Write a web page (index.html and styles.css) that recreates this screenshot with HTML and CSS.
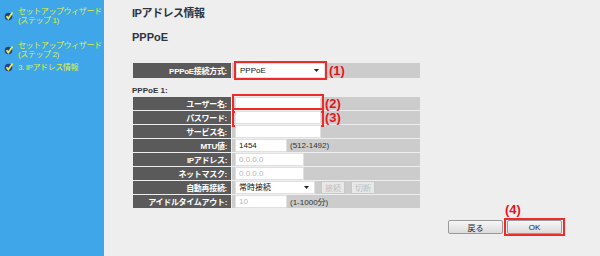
FILE: index.html
```html
<!DOCTYPE html>
<html lang="ja">
<head>
    <meta charset="UTF-8">
    <title>IPアドレス情報</title>
    <link rel="stylesheet" href="styles.css">
</head>
<body>
<div class="page">
    <div class="side">
        <ul class="steps">
            <li class="step1"><svg class="chk" viewBox="0 0 10 10"><circle cx="4.5" cy="5.5" r="3.8" fill="#2a3f8a"/><path d="M2.5 5.2 L4.3 7.4 L8.6 1.4" fill="none" stroke="#e8f040" stroke-width="1.8"/></svg><span>セットアップウィザード<br>(ステップ 1)</span></li>
            <li class="step2"><svg class="chk" viewBox="0 0 10 10"><circle cx="4.5" cy="5.5" r="3.8" fill="#2a3f8a"/><path d="M2.5 5.2 L4.3 7.4 L8.6 1.4" fill="none" stroke="#e8f040" stroke-width="1.8"/></svg><span>セットアップウィザード<br>(ステップ 2)</span></li>
            <li class="step3"><svg class="chk" viewBox="0 0 10 10"><circle cx="4.5" cy="5.5" r="3.8" fill="#2a3f8a"/><path d="M2.5 5.2 L4.3 7.4 L8.6 1.4" fill="none" stroke="#e8f040" stroke-width="1.8"/></svg><span>3. IPアドレス情報</span></li>
        </ul>
    </div>
    <div class="main">
        <h1>IPアドレス情報</h1>
        <h2>PPPoE</h2>
        <table class="form top">
            <tr>
                <th>PPPoE接続方式:</th>
                <td><select class="sel-wide red"><option>PPPoE</option></select><span class="mark">(1)</span></td>
            </tr>
        </table>
        <h3>PPPoE 1:</h3>
        <table class="form">
            <tr><th>ユーザー名:</th><td><input class="w86 red" type="text"><span class="mark">(2)</span></td></tr>
            <tr><th>パスワード:</th><td><input class="w86 red" type="password"><span class="mark">(3)</span></td></tr>
            <tr><th>サービス名:</th><td><input class="w86" type="text"></td></tr>
            <tr><th>MTU値:</th><td><input class="w52" type="text" value="1454"><span class="note">(512-1492)</span></td></tr>
            <tr><th>IPアドレス:</th><td><input class="w69 off" type="text" value="0.0.0.0"></td></tr>
            <tr><th>ネットマスク:</th><td><input class="w69 off" type="text" value="0.0.0.0"></td></tr>
            <tr><th>自動再接続:</th><td><select class="sel-small"><option>常時接続</option></select><button class="mini">接続</button><button class="mini">切断</button></td></tr>
            <tr><th>アイドルタイムアウト:</th><td><input class="w52 off" type="text" value="10"><span class="note">(1-1000分)</span></td></tr>
        </table>
        <div class="btns">
            <button class="btn">戻る</button>
            <div class="okcol">
                <span class="mark">(4)</span>
                <span class="okbox"><button class="btn">OK</button></span>
            </div>
        </div>
    </div>
</div>
</body>
</html>
```

FILE: styles.css
```css
html, body {
    margin: 0;
    padding: 0;
    background: #eeeeee;
    font-family: "Liberation Sans", "Noto Sans CJK JP", sans-serif;
}
.page {
    display: flex;
    height: 256px;
}
.side {
    width: 104px;
    background: #3fa6ea;
    flex-shrink: 0;
}
.steps {
    list-style: none;
    margin: 0;
    padding: 7px 0 0 4px;
}
.steps li {
    display: flex;
    align-items: center;
    color: #dcef3c;
    font-size: 8px;
    line-height: 9px;
    letter-spacing: -0.4px;
    white-space: nowrap;
}
.steps li span {
    margin-left: 4px;
}
.steps .step2 {
    margin-top: 16px;
}
.steps .step3 {
    margin-top: 3px;
}
.chk {
    width: 10px;
    height: 10px;
}
.main {
    padding-left: 28px;
    width: 433px;
}
h1 {
    margin: 6px 0 0 0;
    font-size: 11px;
    line-height: 14px;
    letter-spacing: -0.5px;
    font-weight: bold;
    color: #2e3440;
}
h2 {
    margin: 10px 0 0 0;
    font-size: 11px;
    line-height: 14px;
    font-weight: bold;
    color: #2e3440;
}
h3 {
    margin: 7px 0 0 0;
    font-size: 8px;
    line-height: 10px;
    font-weight: bold;
    color: #333;
}
.form {
    width: 289px;
    border-collapse: separate;
    border-spacing: 1px;
    font-size: 8px;
}
.form.top {
    margin-top: 18px;
}
.form th {
    width: 94px;
    height: 13px;
    padding: 0 4px 0 0;
    background: #5a5a5a;
    color: #ffffff;
    text-align: right;
    font-weight: bold;
    font-size: 8px;
    letter-spacing: -0.3px;
    white-space: nowrap;
}
.form.top th {
    height: 15px;
}
.form td {
    padding: 0 0 0 3px;
    background: #cccccc;
    white-space: nowrap;
    color: #333;
}
.form input {
    box-sizing: border-box;
    height: 13px;
    border: 1px solid #e0e0e0;
    background: #fff;
    padding: 0 3px;
    font-size: 8px;
    font-family: inherit;
    vertical-align: middle;
    color: #222;
}
.form input.off {
    color: #b5b5b5;
}
.w86 { width: 86px; }
.w69 { width: 69px; }
.w52 { width: 52px; }
.red {
    outline: 2px solid #ee2a2a;
    outline-offset: 1px;
}
.form select {
    box-sizing: border-box;
    appearance: none;
    -webkit-appearance: none;
    border: 1px solid #e0e0e0;
    font-size: 8px;
    font-family: inherit;
    color: #111;
    padding: 0 3px;
    vertical-align: middle;
    background: #fff url("data:image/svg+xml;utf8,<svg xmlns='http://www.w3.org/2000/svg' width='5' height='3'><path d='M0 0h5L2.5 3z' fill='%23222'/></svg>") no-repeat right 5px center;
}
.sel-wide {
    width: 89px;
    height: 15px;
    margin-left: 1px;
}
.sel-wide.red {
    outline-offset: 0;
}
.sel-small {
    width: 80px;
    height: 13px;
}
.mark {
    color: #e8141c;
    font-weight: bold;
    font-size: 13px;
    line-height: 12px;
    vertical-align: middle;
    margin-left: 4px;
}
.note {
    margin-left: 3px;
    vertical-align: middle;
}
.mini {
    box-sizing: border-box;
    height: 13px;
    margin-left: 6px;
    padding: 0 3px;
    font-size: 8px;
    font-family: inherit;
    color: #c0c0c0;
    background: #e8e8e8;
    border: 1px solid #c8c8c8;
    vertical-align: middle;
}
.btns {
    display: flex;
    justify-content: flex-end;
    align-items: flex-end;
    margin-top: -5px;
}
.okcol {
    display: flex;
    flex-direction: column;
    align-items: flex-start;
    margin-left: 1px;
}
.okcol .mark {
    margin-left: 1px;
    margin-bottom: 2px;
}
.btn {
    box-sizing: border-box;
    width: 55px;
    height: 14px;
    padding: 0;
    font-size: 8px;
    font-family: inherit;
    color: #222;
    background: linear-gradient(#f6f6f6, #dcdcdc);
    border: 1px solid #9a9a9a;
    border-radius: 2px;
    margin-bottom: 2px;
}
.okbox {
    display: inline-block;
    line-height: 0;
    border: 2px solid #ee2a2a;
    padding: 0 1px;
}
.okbox .btn {
    margin-bottom: 0;
}
```
